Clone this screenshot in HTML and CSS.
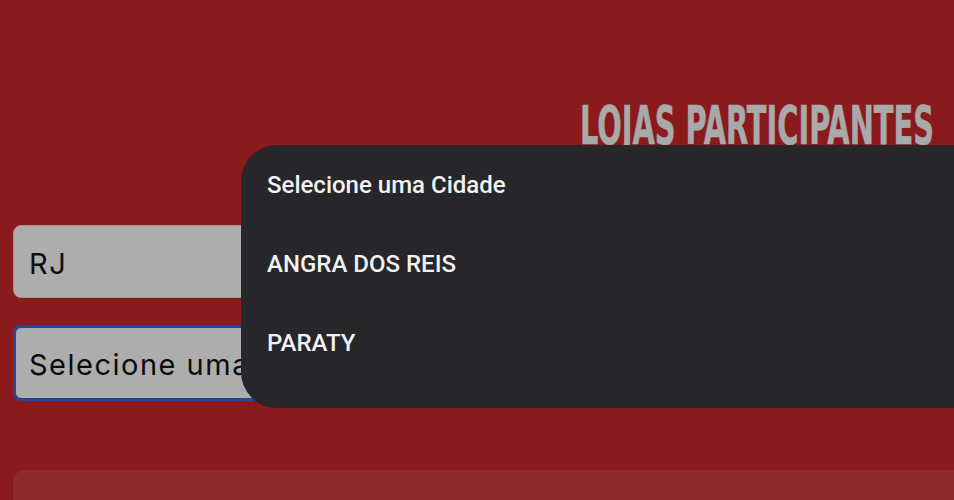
FILE: index.html
```html
<!DOCTYPE html>
<html lang="en">
<head>
  <meta charset="UTF-8">
  <meta name="viewport" content="width=device-width, initial-scale=1.0">
  <title>Lojas participantes</title>
  <link rel="stylesheet" href="styles.css">
</head>
<body>
  <main class="page">
    <h1 class="title">LOJAS PARTICIPANTES</h1>
    <div class="field">RJ</div>
    <div class="field field-focus">Selecione uma Cidade</div>
    <div class="card"></div>
  </main>

  <!--city dropdown, open over the form-->
  <ul class="menu">
    <li>Selecione uma Cidade</li>
    <li>ANGRA DOS REIS</li>
    <li>PARATY</li>
  </ul>
</body>
</html>
```

FILE: styles.css
```css
*{margin: 0; padding: 0; box-sizing: border-box;}
html, body{height: 100%;}
body{
  background-color: #8a1a1c;
  overflow: hidden;
  position: relative;
}

.page{
  padding: 100px 20px 0 13px;
}

/*no condensed display font here, so squeeze a heavy one*/
.title{
  font-family: "DejaVu Sans", sans-serif;
  font-stretch: condensed;
  font-size: 53px;
  line-height: 52px;
  font-weight: 700;
  color: #a9a9a9;
  -webkit-text-stroke: 0.6px #a9a9a9;
  text-align: right;
  white-space: nowrap;
  height: 125px;
  transform: scaleX(0.605);
  transform-origin: right center;
}

.field{
  width: 300px;
  height: 73px;
  margin-bottom: 27px;
  padding: 3px 0 0 15px;
  display: flex;
  align-items: center;
  white-space: nowrap;
  background-color: #adadad;
  border: 1px solid #a39090;
  border-radius: 8px;
  font-family: "Inter", sans-serif;
  font-size: 29px;
  letter-spacing: 1.5px;
  color: #0c0c0c;
}

.field-focus{
  height: 76px;
  border: 3px solid #2c4396;
  padding-left: 13px;
  margin-bottom: 69px;
}

.card{
  height: 30px;
  margin-right: -20px;
  background-color: #8e2b2d;
  border-radius: 12px 0 0 0;
}

/*dropdown*/
.menu{
  position: absolute;
  top: 145px;
  left: 241px;
  right: 0;
  height: 263px;
  padding-top: 1px;
  list-style: none;
  background-color: #26262b;
  border-radius: 36px 0 0 36px;
  font-family: "Roboto", sans-serif;
  font-size: 24px;
  font-weight: 500;
  color: #f2f2f2;
}
.menu li{
  height: 79px;
  line-height: 79px;
  padding-left: 26px;
}
```
